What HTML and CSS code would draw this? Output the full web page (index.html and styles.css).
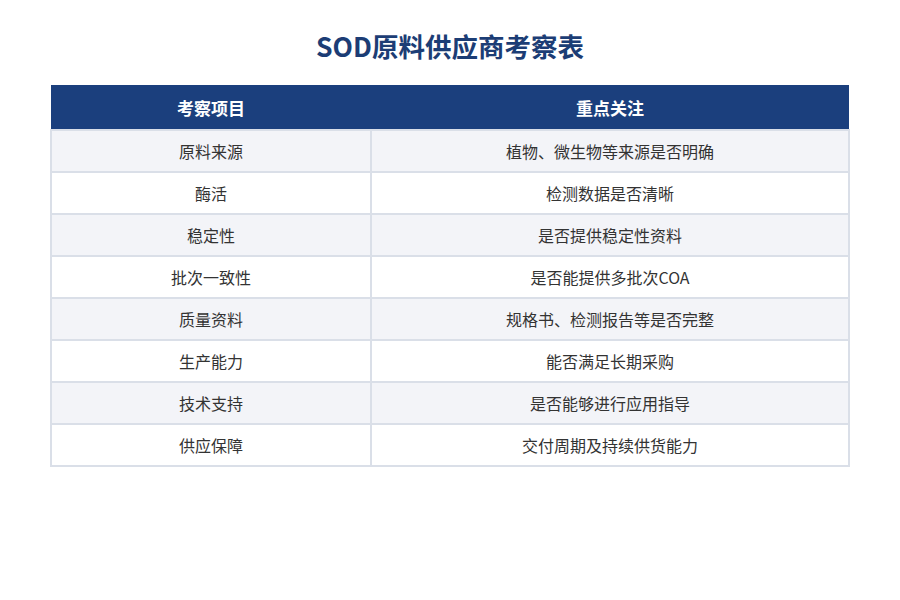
FILE: index.html
```html
<!DOCTYPE html>
<html lang="zh">
<head>
<meta charset="utf-8">
<link rel="stylesheet" href="styles.css">
</head>
<body>
<div class="page">
  <h1 class="title">SOD原料供应商考察表</h1>
  <table class="sheet">
    <thead>
      <tr><th class="c1">考察项目</th><th>重点关注</th></tr>
    </thead>
    <tbody>
      <tr><td>原料来源</td><td>植物、微生物等来源是否明确</td></tr>
      <tr><td>酶活</td><td>检测数据是否清晰</td></tr>
      <tr><td>稳定性</td><td>是否提供稳定性资料</td></tr>
      <tr><td>批次一致性</td><td>是否能提供多批次COA</td></tr>
      <tr><td>质量资料</td><td>规格书、检测报告等是否完整</td></tr>
      <tr><td>生产能力</td><td>能否满足长期采购</td></tr>
      <tr><td>技术支持</td><td>是否能够进行应用指导</td></tr>
      <tr><td>供应保障</td><td>交付周期及持续供货能力</td></tr>
    </tbody>
  </table>
</div>
</body>
</html>
```

FILE: styles.css
```css
html, body {
  margin: 0;
  padding: 0;
  background: #ffffff;
}
body {
  font-family: "Noto Sans CJK SC", "Noto Sans", sans-serif;
  color: #333333;
}
.page {
  width: 800px;
  margin: 0 auto;
  padding-top: 27px;
}
.title {
  margin: 0 0 20px;
  text-align: center;
  font-size: 26.5px;
  font-weight: 700;
  line-height: 38px;
  color: #1c3d75;
}
.sheet {
  width: 800px;
  border-collapse: collapse;
  table-layout: fixed;
}
.sheet th {
  background: #1b3f7d;
  color: #ffffff;
  font-size: 17px;
  font-weight: 700;
  height: 44px;
  padding: 0;
  text-align: center;
}
.sheet th.c1 {
  width: 320px;
}
.sheet td {
  height: 40px;
  padding: 0;
  border: 2px solid #dadfe8;
  text-align: center;
  font-size: 16px;
  color: #333333;
}
.sheet tbody tr:nth-child(odd) td {
  background: #f3f4f8;
}
```
